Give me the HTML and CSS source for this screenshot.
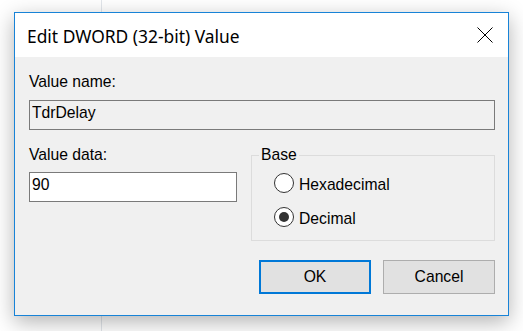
FILE: index.html
```html
<!DOCTYPE html>
<html lang="en">
<head>
<meta charset="utf-8">
<title>Edit DWORD (32-bit) Value</title>
<link rel="stylesheet" href="styles.css">
</head>
<body>
<div class="dialog">
  <div class="titlebar">
    <span class="title">Edit DWORD (32-bit) Value</span>
    <button class="close" aria-label="Close">
      <svg width="16" height="16" viewBox="0 0 16 16"><path d="M0.5 0.5 L15.5 15.5 M15.5 0.5 L0.5 15.5" stroke="#000" stroke-width="1" fill="none"/></svg>
    </button>
  </div>
  <div class="content">
    <div class="label">Value name:</div>
    <input class="field disabled" type="text" value="TdrDelay" readonly>
    <div class="row">
      <div class="col">
        <div class="label">Value data:</div>
        <input class="field data" type="text" value="90">
      </div>
      <fieldset class="group">
        <legend>Base</legend>
        <div class="radio"><span class="dot"></span><span class="rtext">Hexadecimal</span></div>
        <div class="radio checked"><span class="dot"></span><span class="rtext">Decimal</span></div>
      </fieldset>
    </div>
    <div class="buttons">
      <button class="btn default">OK</button>
      <button class="btn">Cancel</button>
    </div>
  </div>
</div>
</body>
</html>
```
FILE: styles.css
```css
html, body {
  margin: 0;
  padding: 0;
}
body {
  width: 523px;
  height: 331px;
  overflow: hidden;
  background: #fff linear-gradient(to right, transparent 101px, #e2e6eb 101px, #e2e6eb 102px, transparent 102px);
  font-family: "Liberation Sans", Arial, sans-serif;
  color: #000;
}
.dialog {
  margin: 12px 0 0 14px;
  width: 495px;
  height: 304px;
  box-sizing: border-box;
  border: 1px solid #1883d7;
  background: #f0f0f0;
  box-shadow: 0 6px 20px rgba(0, 0, 0, 0.3);
  display: flex;
  flex-direction: column;
}
.titlebar {
  height: 44px;
  background: #fff;
  display: flex;
  align-items: center;
  justify-content: space-between;
}
.title {
  padding-left: 12px;
  font-family: "Noto Sans", "Open Sans", sans-serif;
  font-size: 17.4px;
  line-height: 20px;
  padding-top: 1px;
}
.close {
  width: 46px;
  height: 44px;
  border: 0;
  padding: 0;
  margin: 0;
  background: transparent;
  display: flex;
  align-items: center;
  justify-content: center;
}
.close svg { display: block; }
.content {
  padding: 16px 13px 0 14px;
  display: flex;
  flex-direction: column;
  font-size: 15.7px;
}
.label {
  line-height: 18px;
  height: 18px;
}
.field {
  display: block;
  box-sizing: border-box;
  height: 30px;
  margin: 9px 0 0 0;
  border: 1px solid #7a7a7a;
  background: #fff;
  padding: 0 2px 5px 2px;
  font-family: "Liberation Sans", Arial, sans-serif;
  font-size: 15.7px;
  color: #000;
  outline: none;
}
.field.disabled {
  width: 466px;
  background: #f0f0f0;
}
.field.data {
  width: 208px;
  margin-top: 8px;
}
.row {
  display: flex;
  gap: 14px;
  margin-top: 16px;
}
.col {
  width: 208px;
}
.group {
  margin: 0;
  width: 244px;
  box-sizing: border-box;
  border: 1px solid #dcdcdc;
  padding: 9px 0 13px 0;
  display: flex;
  flex-direction: column;
  gap: 14px;
}
.group legend {
  margin-left: 7px;
  padding: 0 2px;
  line-height: 18px;
  font-size: 15.7px;
}
.radio {
  display: flex;
  align-items: center;
  gap: 5px;
  height: 20px;
  margin-left: 22px;
}
.dot {
  width: 20px;
  height: 20px;
  box-sizing: border-box;
  border: 1px solid #333;
  border-radius: 50%;
  background: #fff;
  display: flex;
  align-items: center;
  justify-content: center;
}
.checked .dot::after {
  content: "";
  width: 10px;
  height: 10px;
  border-radius: 50%;
  background: #333;
}
.rtext {
  line-height: 18px;
  padding-top: 3px;
}
.buttons {
  display: flex;
  justify-content: flex-end;
  gap: 12px;
  margin-top: 19px;
}
.btn {
  width: 112px;
  height: 34px;
  box-sizing: border-box;
  background: #e1e1e1;
  border: 1px solid #adadad;
  font-family: "Liberation Sans", Arial, sans-serif;
  font-size: 15.7px;
  color: #000;
  padding: 0;
  margin: 0;
}
.btn.default {
  border: 2px solid #0078d7;
}
```
